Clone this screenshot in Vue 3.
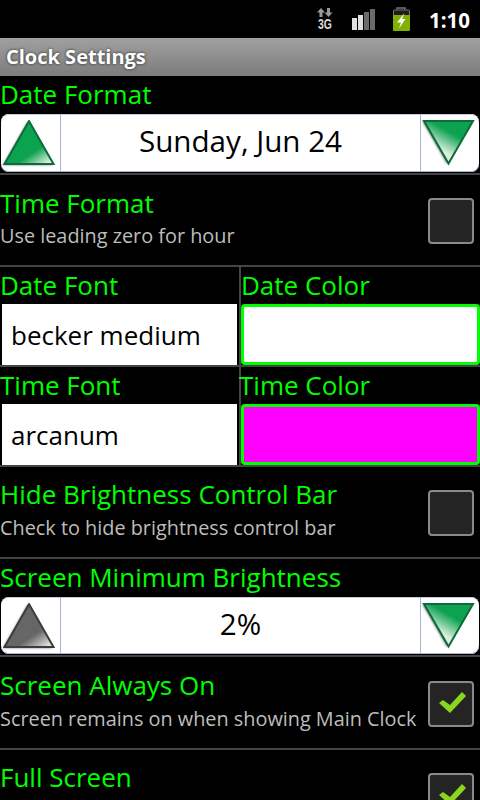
<template>
  <div class="screen">
    <div class="status">
      <svg class="ic-3g" width="20" height="28" viewBox="0 0 20 28">
        <path d="M4 1 8 5.500H5.500V10h-3V5.500H0z" fill="#999"/>
        <path d="M11.500 10 7.500 5.500H10V1h3v4.500h2.500z" fill="#999"/>
        <text x="1" y="22" textLength="14" lengthAdjust="spacingAndGlyphs" class="ic-3g__txt">3G</text>
      </svg>
      <div class="bars">
        <span v-for="(b, i) in signal" :key="i" class="bars__bar" :class="{ 'bars__bar--on': b.on }" :style="{ height: b.h + 'px' }"></span>
      </div>
      <svg class="ic-batt" width="19" height="25" viewBox="0 0 19 25">
        <path d="M5 2.500V1h8v1.500" fill="none" stroke="#777" stroke-width="1.500"/>
        <rect x="1.500" y="3" width="16" height="8" rx="1" fill="#1c1c1c" stroke="#777"/>
        <path d="M1 8h17v15a1 1 0 0 1-1 1H2a1 1 0 0 1-1-1z" fill="#80b000"/>
        <path d="M12.500 6 5 15.500h4L7 21.500l6.500-9.500H10z" fill="#fff"/>
      </svg>
      <span class="status__time">1:10</span>
    </div>
    <div class="title">Clock Settings</div>

    <div class="label label--solo">Date Format</div>
    <div class="spinner-wrap">
      <div class="spinner">
        <div class="spinner__btn">
          <svg width="58" height="50" viewBox="0 0 58 50">
            <defs>
              <linearGradient id="gu" x1="0.4" y1="0.4" x2="0.85" y2="1">
                <stop offset="0.5" stop-color="#0ca24f"/>
                <stop offset="1" stop-color="#e2f0e2"/>
              </linearGradient>
              <linearGradient id="gd" x1="0.95" y1="0" x2="0.45" y2="0.75">
                <stop offset="0.5" stop-color="#0ca24f"/>
                <stop offset="1" stop-color="#dcefdf"/>
              </linearGradient>
              <linearGradient id="gg" x1="0.4" y1="0.4" x2="0.85" y2="1">
                <stop offset="0.5" stop-color="#666"/>
                <stop offset="1" stop-color="#e0e0e0"/>
              </linearGradient>
              <filter id="soft" x="-20%" y="-20%" width="140%" height="140%"><feGaussianBlur stdDeviation="1.300"/></filter>
            </defs>
            <path d="M28 1 52.500 44H3.500z" fill="#777" filter="url(#soft)" transform="translate(-1.500 1)"/>
            <path d="M28 1 52.500 44H3.500z" fill="url(#gu)" stroke="#0b6b3a" stroke-width="2"/>
          </svg>
        </div>
        <div class="spinner__val">Sunday, Jun 24</div>
        <div class="spinner__btn">
          <svg width="58" height="50" viewBox="0 0 58 50">
            <path d="M3 1H52L27.500 43.500z" fill="#777" filter="url(#soft)" transform="translate(-1.500 .5)"/>
            <path d="M3 1H52L27.500 43.500z" fill="url(#gd)" stroke="#0b6b3a" stroke-width="2"/>
          </svg>
        </div>
      </div>
    </div>

    <div class="row row--time">
      <div class="row__text">
        <div class="label">Time Format</div>
        <div class="sub">Use leading zero for hour</div>
      </div>
      <span class="check"></span>
    </div>

    <div class="pair">
      <div class="pair__cell">
        <div class="label">Date Font</div>
        <div class="field">becker medium</div>
      </div>
      <div class="pair__cell">
        <div class="label">Date Color</div>
        <div class="swatch"></div>
      </div>
    </div>
    <div class="pair">
      <div class="pair__cell">
        <div class="label">Time Font</div>
        <div class="field">arcanum</div>
      </div>
      <div class="pair__cell">
        <div class="label label--tight">Time Color</div>
        <div class="swatch swatch--pink"></div>
      </div>
    </div>

    <div class="row">
      <div class="row__text">
        <div class="label">Hide Brightness Control Bar</div>
        <div class="sub">Check to hide brightness control bar</div>
      </div>
      <span class="check"></span>
    </div>

    <div class="label label--solo">Screen Minimum Brightness</div>
    <div class="spinner-wrap spinner-wrap--low">
      <div class="spinner">
        <div class="spinner__btn">
          <svg width="58" height="50" viewBox="0 0 58 50">
            <path d="M28 1 52.500 44H3.500z" fill="#777" filter="url(#soft)" transform="translate(-1.500 1)"/>
            <path d="M28 1 52.500 44H3.500z" fill="url(#gg)" stroke="#3c3c3c" stroke-width="2"/>
          </svg>
        </div>
        <div class="spinner__val">2%</div>
        <div class="spinner__btn">
          <svg width="58" height="50" viewBox="0 0 58 50">
            <path d="M3 1H52L27.500 43.500z" fill="#777" filter="url(#soft)" transform="translate(-1.500 .5)"/>
            <path d="M3 1H52L27.500 43.500z" fill="url(#gd)" stroke="#0b6b3a" stroke-width="2"/>
          </svg>
        </div>
      </div>
    </div>

    <div class="row row--tall">
      <div class="row__text">
        <div class="label">Screen Always On</div>
        <div class="sub">Screen remains on when showing Main Clock</div>
      </div>
      <span class="check">
        <svg width="30" height="24" viewBox="0 0 30 24"><path d="M3 11 7 8 14 13 26 0 30 4 14 21z" fill="#8ad61e"/></svg>
      </span>
    </div>
    <div class="row">
      <div class="row__text">
        <div class="label">Full Screen</div>
      </div>
      <span class="check">
        <svg width="30" height="24" viewBox="0 0 30 24"><path d="M3 11 7 8 14 13 26 0 30 4 14 21z" fill="#8ad61e"/></svg>
      </span>
    </div>
  </div>
</template>

<script setup>
const signal = [
  { h: 12, on: true },
  { h: 15, on: true },
  { h: 18, on: false },
  { h: 21, on: false }
]
</script>

<style>
html, body { background: #000; }
</style>

<style scoped>
.screen { width: 480px; height: 800px; overflow: hidden; background: #000; font-family: "Open Sans", "Noto Sans", sans-serif; }

.status { height: 38px; display: flex; align-items: flex-start; justify-content: flex-end; }
.ic-3g { margin: 7px 15px 0 0; }
.ic-3g__txt { font: bold 14px "Liberation Sans", sans-serif; fill: #d8d8d8; }
.bars { display: flex; align-items: flex-end; gap: 1px; height: 21px; margin: 9px 17px 0 0; }
.bars__bar { width: 5px; background: #6a6a6a; }
.bars__bar--on { background: #e0e0e0; }
.ic-batt { margin: 7px 18px 0 0; }
.status__time { font: bold 20.5px/38px "Open Sans", sans-serif; color: #fff; margin: 1px 10px 0 0; }

.title { height: 38px; line-height: 38px; padding-left: 6px; box-sizing: border-box; background: linear-gradient(#a0a0a0, #7c7c7c); color: #fff; font-size: 20px; font-weight: 700; text-shadow: 0 0 3px #222; }

.label { color: #00ff00; font-size: 26px; line-height: 32px; white-space: nowrap; }
.label--solo { height: 38px; line-height: 36px; }

.spinner-wrap { height: 61px; box-sizing: border-box; border-bottom: 2px solid #444; padding-bottom: 1px; }
.spinner-wrap--low { height: 60px; }
.spinner { height: 100%; margin: 0 1px; background: #fff; border-radius: 8px; box-shadow: inset 0 -1px #a8b4d0, inset 0 1px #c4cce0; display: flex; }
.spinner__btn { width: 59px; flex: none; box-sizing: border-box; padding-top: 6px; }
.spinner__btn svg { display: block; }
.spinner__btn:first-child { width: 60px; border-right: 1px solid #a8b4d0; }
.spinner__btn:last-child { border-left: 1px solid #a8b4d0; }
.spinner__val { flex: 1; display: flex; align-items: center; justify-content: center; padding-bottom: 5px; color: #000; font-size: 29.6px; }

.row { height: 92px; border-bottom: 2px solid #444; box-sizing: border-box; display: flex; align-items: flex-start; justify-content: space-between; padding: 11px 6px 0 0; }
.row--time { padding-top: 12px; }
.row--tall { height: 93px; padding-top: 12px; }
.row__text { display: flex; flex-direction: column; }
.sub { color: #bdbdbd; font-size: 19.85px; line-height: 32px; margin-top: 2px; white-space: nowrap; }
.row--time .sub { margin-top: 1px; }
.check { width: 46px; height: 46px; margin-top: 12px; box-sizing: border-box; border: 2px solid #8a8a8a; border-radius: 4px; background: #242424; display: flex; align-items: center; justify-content: center; flex: none; }
.row--time .check { margin-top: 11px; }
.check svg { display: block; }

.pair { display: grid; grid-template-columns: 239px 1fr; height: 100px; border-bottom: 2px solid #444; box-sizing: border-box; }
.pair__cell { display: flex; flex-direction: column; justify-content: flex-end; padding-right: 2px; }
.pair__cell + .pair__cell { border-left: 2px solid #444; padding-right: 0; }
.pair__cell .label { height: 37px; line-height: 36px; }
.pair__cell .label--tight { margin-left: -2px; }
.field { height: 61px; box-sizing: border-box; margin-left: 2px; padding: 1px 0 0 9px; background: #fff; color: #000; font-size: 26px; line-height: 60px; }
.swatch { height: 61px; box-sizing: border-box; background: #fff; border: 3px solid #00ff00; border-radius: 4px; }
.swatch--pink { background: #ff00ff; }
</style>
